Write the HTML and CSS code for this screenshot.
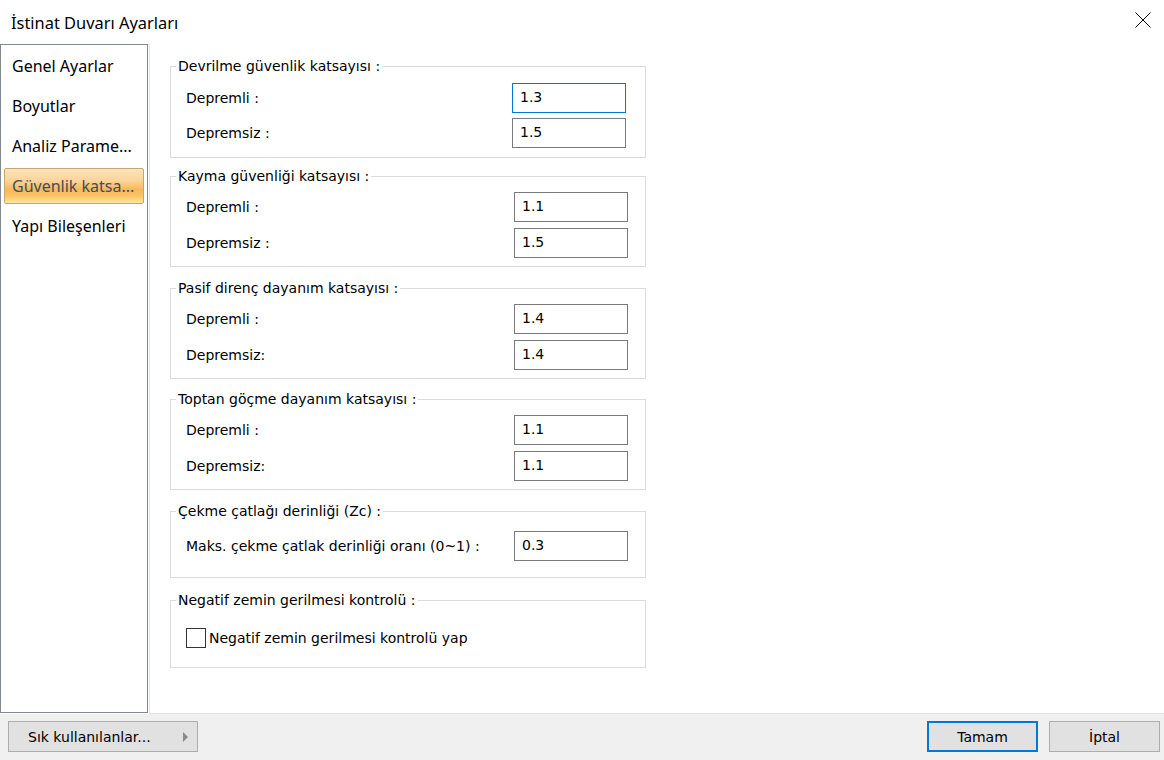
FILE: index.html
```html
<!DOCTYPE html>
<html lang="tr">
<head>
<meta charset="utf-8">
<title>İstinat Duvarı Ayarları</title>
<link rel="stylesheet" href="styles.css">
</head>
<body>
<div class="window">
  <header class="titlebar">
    <span class="title">İstinat Duvarı Ayarları</span>
    <button class="close" aria-label="Kapat">
      <svg width="16" height="16" viewBox="0 0 16 16"><path d="M0.5 0.5 L15.5 15.5 M15.5 0.5 L0.5 15.5" stroke="#000" stroke-width="1" fill="none"/></svg>
    </button>
  </header>
  <div class="main">
    <nav class="sidebar">
      <div class="nav-item">Genel Ayarlar</div>
      <div class="nav-item">Boyutlar</div>
      <div class="nav-item">Analiz Parame...</div>
      <div class="nav-item selected">Güvenlik katsa...</div>
      <div class="nav-item">Yapı Bileşenleri</div>
    </nav>
    <div class="content">
      <fieldset class="group group-1">
        <legend>Devrilme güvenlik katsayısı :</legend>
        <div class="row"><span class="label">Depremli :</span><div class="input focused">1.3</div></div>
        <div class="row"><span class="label">Depremsiz :</span><div class="input">1.5</div></div>
      </fieldset>
      <fieldset class="group group-2">
        <legend>Kayma güvenliği katsayısı :</legend>
        <div class="row"><span class="label">Depremli :</span><div class="input">1.1</div></div>
        <div class="row"><span class="label">Depremsiz :</span><div class="input">1.5</div></div>
      </fieldset>
      <fieldset class="group group-3">
        <legend>Pasif direnç dayanım katsayısı :</legend>
        <div class="row"><span class="label">Depremli :</span><div class="input">1.4</div></div>
        <div class="row"><span class="label">Depremsiz:</span><div class="input">1.4</div></div>
      </fieldset>
      <fieldset class="group group-4">
        <legend>Toptan göçme dayanım katsayısı :</legend>
        <div class="row"><span class="label">Depremli :</span><div class="input">1.1</div></div>
        <div class="row"><span class="label">Depremsiz:</span><div class="input">1.1</div></div>
      </fieldset>
      <fieldset class="group group-5">
        <legend>Çekme çatlağı derinliği (Zc) :</legend>
        <div class="row"><span class="label">Maks. çekme çatlak derinliği oranı (0~1) :</span><div class="input">0.3</div></div>
      </fieldset>
      <fieldset class="group group-6">
        <legend>Negatif zemin gerilmesi kontrolü :</legend>
        <div class="row row-check"><span class="checkbox"></span><span class="check-label">Negatif zemin gerilmesi kontrolü yap</span></div>
      </fieldset>
    </div>
  </div>
  <footer class="footer">
    <button class="btn btn-menu">Sık kullanılanlar...<span class="arrow"></span></button>
    <div class="spacer"></div>
    <button class="btn btn-primary">Tamam</button>
    <button class="btn">İptal</button>
  </footer>
</div>
</body>
</html>
```

FILE: styles.css
```css
* { box-sizing: border-box; }
html, body { margin: 0; padding: 0; }
body {
  width: 1164px;
  height: 760px;
  background: #fff;
  font-family: "DejaVu Sans", "Noto Sans", sans-serif;
  font-size: 14px;
  color: #000;
  overflow: hidden;
}
.window {
  width: 1164px;
  height: 760px;
  display: flex;
  flex-direction: column;
}
.titlebar {
  height: 44px;
  display: flex;
  align-items: center;
  padding-left: 11px;
  flex: none;
}
.title {
  font-family: "Noto Sans", sans-serif;
  font-size: 16.4px;
  color: #000;
  flex: 1;
}
.close {
  width: 42px;
  height: 30px;
  margin-right: 0;
  margin-bottom: 4px;
  border: 0;
  background: transparent;
  display: flex;
  align-items: center;
  justify-content: center;
  padding: 0;
}
.main {
  height: 670px;
  display: flex;
  flex: none;
}
.sidebar {
  width: 148px;
  height: 669px;
  border: 1px solid #828790;
  padding-top: 1px;
  flex: none;
  display: flex;
  flex-direction: column;
}
.nav-item {
  height: 36px;
  flex: none;
  margin: 2px 3px;
  border: 1px solid transparent;
  border-radius: 2px;
  padding-left: 7px;
  display: flex;
  align-items: center;
  font-family: "Noto Sans", sans-serif;
  font-size: 16px;
  color: #000;
  white-space: nowrap;
}
.nav-item.selected {
  border-color: #c6a66f;
  color: #3f4e5d;
  background: linear-gradient(#fde3bd 0%, #fcd398 35%, #f9b85a 60%, #fac565 80%, #fde7a4 100%);
}
.content {
  flex: 1;
  height: 670px;
  margin-left: 1px;
  border-left: 1px solid #e3e3e3;
  border-bottom: 1px solid #e3e3e3;
  padding: 14px 0 0 20px;
  display: flex;
  flex-direction: column;
}
.group {
  width: 476px;
  margin: 0;
  border: 1px solid #dcdcdc;
  padding: 8px 17px 8px 0;
  display: flex;
  flex-direction: column;
  gap: 6px;
  min-width: 0;
}
.group legend {
  padding: 0 2px;
  margin-left: 5px;
  line-height: 16px;
  font-size: 14px;
}
.group-1 { padding: 9px 19px 9px 0; gap: 5px; }
.group-2 { margin-top: 10px; }
.group-3 { margin-top: 13px; }
.group-4 { margin-top: 12px; }
.group-5 { margin-top: 13px; padding-top: 12px; padding-bottom: 16px; }
.group-6 { margin-top: 14px; padding-top: 15px; padding-bottom: 14px; }
.row {
  height: 30px;
  padding-left: 15px;
  display: flex;
  align-items: center;
  justify-content: space-between;
}
.label { white-space: nowrap; }
.input {
  width: 114px;
  height: 30px;
  border: 1px solid #7a7a7a;
  background: #fff;
  padding: 3px 0 0 7px;
  line-height: 20px;
}
.input.focused { border-color: #0078d7; }
.row-check { justify-content: flex-start; }
.checkbox {
  width: 20px;
  height: 20px;
  border: 1px solid #333;
  background: #fff;
  flex: none;
}
.check-label { margin-left: 3px; }
.footer {
  flex: 1;
  background: #f0f0f0;
  display: flex;
  align-items: flex-start;
  padding: 7px 4px 0 8px;
  gap: 11px;
}
.spacer { flex: 1; }
.btn {
  height: 31px;
  width: 111px;
  border: 1px solid #adadad;
  background: #e1e1e1;
  font-family: "DejaVu Sans", sans-serif;
  font-size: 14px;
  color: #000;
  padding: 0;
  display: flex;
  align-items: center;
  justify-content: center;
}
.btn-primary { border: 2px solid #0078d7; }
.btn-menu {
  width: 190px;
  justify-content: flex-start;
  padding-left: 19px;
  position: relative;
}
.arrow {
  position: absolute;
  right: 9px;
  top: 10px;
  width: 0;
  height: 0;
  border-top: 5px solid transparent;
  border-bottom: 5px solid transparent;
  border-left: 5px solid #8a8a8a;
}
```
